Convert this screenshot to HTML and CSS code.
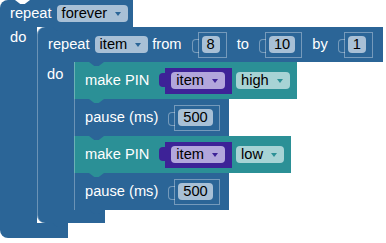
FILE: index.html
```html
<!DOCTYPE html>
<html lang="en">
<head>
  <meta charset="UTF-8">
  <title>Blocks</title>
  <link rel="stylesheet" href="styles.css">
</head>
<body>
  <div class="workspace">
    <!-- repeat forever -->
    <div class="block loop c-block outer">
      <div class="head">
        <span class="label">repeat</span>
        <span class="dd">forever<i class="arrow"></i></span>
      </div>
      <div class="mouth">
        <div class="arm"><span class="label">do</span></div>
        <div class="stack">
          <!-- repeat item from 8 to 10 by 1 -->
          <div class="block loop c-block inner">
            <div class="head">
              <span class="label">repeat</span>
              <span class="dd">item<i class="arrow"></i></span>
              <span class="label">from</span>
              <span class="slot"><span class="num">8</span></span>
              <span class="label">to</span>
              <span class="slot"><span class="num">10</span></span>
              <span class="label">by</span>
              <span class="slot"><span class="num">1</span></span>
            </div>
            <div class="mouth">
              <div class="arm"><span class="label">do</span></div>
              <div class="stack">
                <div class="block stmt pin">
                  <span class="label">make PIN</span>
                  <span class="value var"><span class="dd">item<i class="arrow"></i></span></span>
                  <span class="dd">high<i class="arrow"></i></span>
                </div>
                <div class="block stmt pause">
                  <span class="label">pause (ms)</span>
                  <span class="slot"><span class="num">500</span></span>
                </div>
                <div class="block stmt pin">
                  <span class="label">make PIN</span>
                  <span class="value var"><span class="dd">item<i class="arrow"></i></span></span>
                  <span class="dd">low<i class="arrow"></i></span>
                </div>
                <div class="block stmt pause">
                  <span class="label">pause (ms)</span>
                  <span class="slot"><span class="num">500</span></span>
                </div>
              </div>
            </div>
            <div class="foot"></div>
          </div>
        </div>
      </div>
      <div class="foot"></div>
    </div>
  </div>
</body>
</html>
```

FILE: styles.css
```css
* {
  margin: 0;
  padding: 0;
  box-sizing: border-box;
}
body {
  font-family: "Liberation Sans", Arial, sans-serif;
  font-size: 14.67px;
  line-height: 17px;
  background: #fff;
  overflow: hidden;
}
.workspace {
  display: flex;
  align-items: flex-start;
}

/* colours */
.loop, .pause {
  --c: #2b6597;
  --f: #a8c0d6;
}
.pin {
  --c: #2b9096;
  --f: #a7d3d5;
}
.var {
  --c: #3d2297;
  --f: #b2a6dc;
}

.block {
  position: relative;
  color: #fff;
}

/* C shaped blocks */
.c-block {
  display: flex;
  flex-direction: column;
  align-items: flex-start;
}
.head {
  position: relative;
  display: flex;
  align-items: center;
  background: var(--c);
  border-radius: 8px 0 0 0;
}
.outer > .head {
  height: 27px;
  padding: 0 5px 0 10px;
}
.inner > .head {
  height: 35px;
  padding: 0 10px 0 11px;
}
.mouth {
  display: flex;
}
.arm {
  width: 37px;
  padding-left: 10px;
  background: var(--c);
}
.outer > .mouth > .arm {
  padding-top: 2px;
}
.inner > .mouth > .arm {
  padding-top: 4px;
}
.stack {
  display: flex;
  flex-direction: column;
  align-items: flex-start;
}
.foot {
  position: relative;
  width: 68px;
  background: var(--c);
  border-radius: 0 0 0 8px;
}
.outer > .foot {
  height: 15px;
}
.inner > .foot {
  height: 13px;
}

/* statement blocks */
.stmt {
  display: flex;
  align-items: center;
  height: 37px;
  padding-left: 11px;
  background: var(--c);
}
.pin {
  padding-right: 7px;
}
.pause {
  padding-right: 9px;
}

/* light edge on nested blocks */
.inner > .head,
.inner > .mouth > .arm,
.inner > .foot,
.stmt {
  box-shadow: inset 1px 0 0 rgba(255, 255, 255, 0.3);
}

/* notches and tabs */
.outer > .head::before {
  content: "";
  position: absolute;
  left: 15px;
  top: 0;
  width: 15px;
  height: 4px;
  background: #fff;
  clip-path: polygon(0 0, 100% 0, 65% 100%, 35% 100%);
}
.stmt::after,
.foot::after,
.c-block > .head::after {
  content: "";
  position: absolute;
  left: 15px;
  bottom: -4px;
  width: 15px;
  height: 4px;
  background: var(--c);
  clip-path: polygon(0 0, 100% 0, 65% 100%, 35% 100%);
  z-index: 2;
}
.c-block > .head::after {
  left: 52px;
}

/* fields */
.dd {
  display: inline-flex;
  align-items: center;
  gap: 8px;
  height: 17px;
  padding: 0 7px 0 5px;
  border-radius: 4px;
  background: var(--f);
  color: #000;
}
.arrow {
  width: 0;
  height: 0;
  border-left: 3px solid transparent;
  border-right: 3px solid transparent;
  border-top: 4px solid var(--c);
}
.slot {
  position: relative;
  display: inline-flex;
  align-items: center;
  height: 26px;
  padding: 0 6px 0 3px;
  border: 1px solid rgba(255, 255, 255, 0.35);
}
.slot::before {
  content: "";
  position: absolute;
  left: -7px;
  top: 6px;
  width: 6px;
  height: 12px;
  border: 1px solid rgba(255, 255, 255, 0.35);
  border-right: none;
  border-radius: 4px 0 0 4px;
}
.num {
  display: inline-flex;
  align-items: center;
  height: 17px;
  padding: 0 5px;
  border-radius: 4px;
  background: var(--f);
  color: #000;
}
.value {
  position: relative;
  display: inline-flex;
  align-items: center;
  height: 26px;
  padding: 0 7px 0 6px;
  background: var(--c);
}
.value::before {
  content: "";
  position: absolute;
  left: -6px;
  top: 5px;
  width: 6px;
  height: 14px;
  background: var(--c);
  border-radius: 4px 0 0 4px;
}

/* spacing between row items */
.label + .dd {
  margin-left: 5px;
}
.dd + .label {
  margin-left: 4px;
}
.label + .slot,
.label + .value {
  margin-left: 16px;
}
.slot + .label {
  margin-left: 10px;
}
.value + .dd {
  margin-left: 4px;
}
```
